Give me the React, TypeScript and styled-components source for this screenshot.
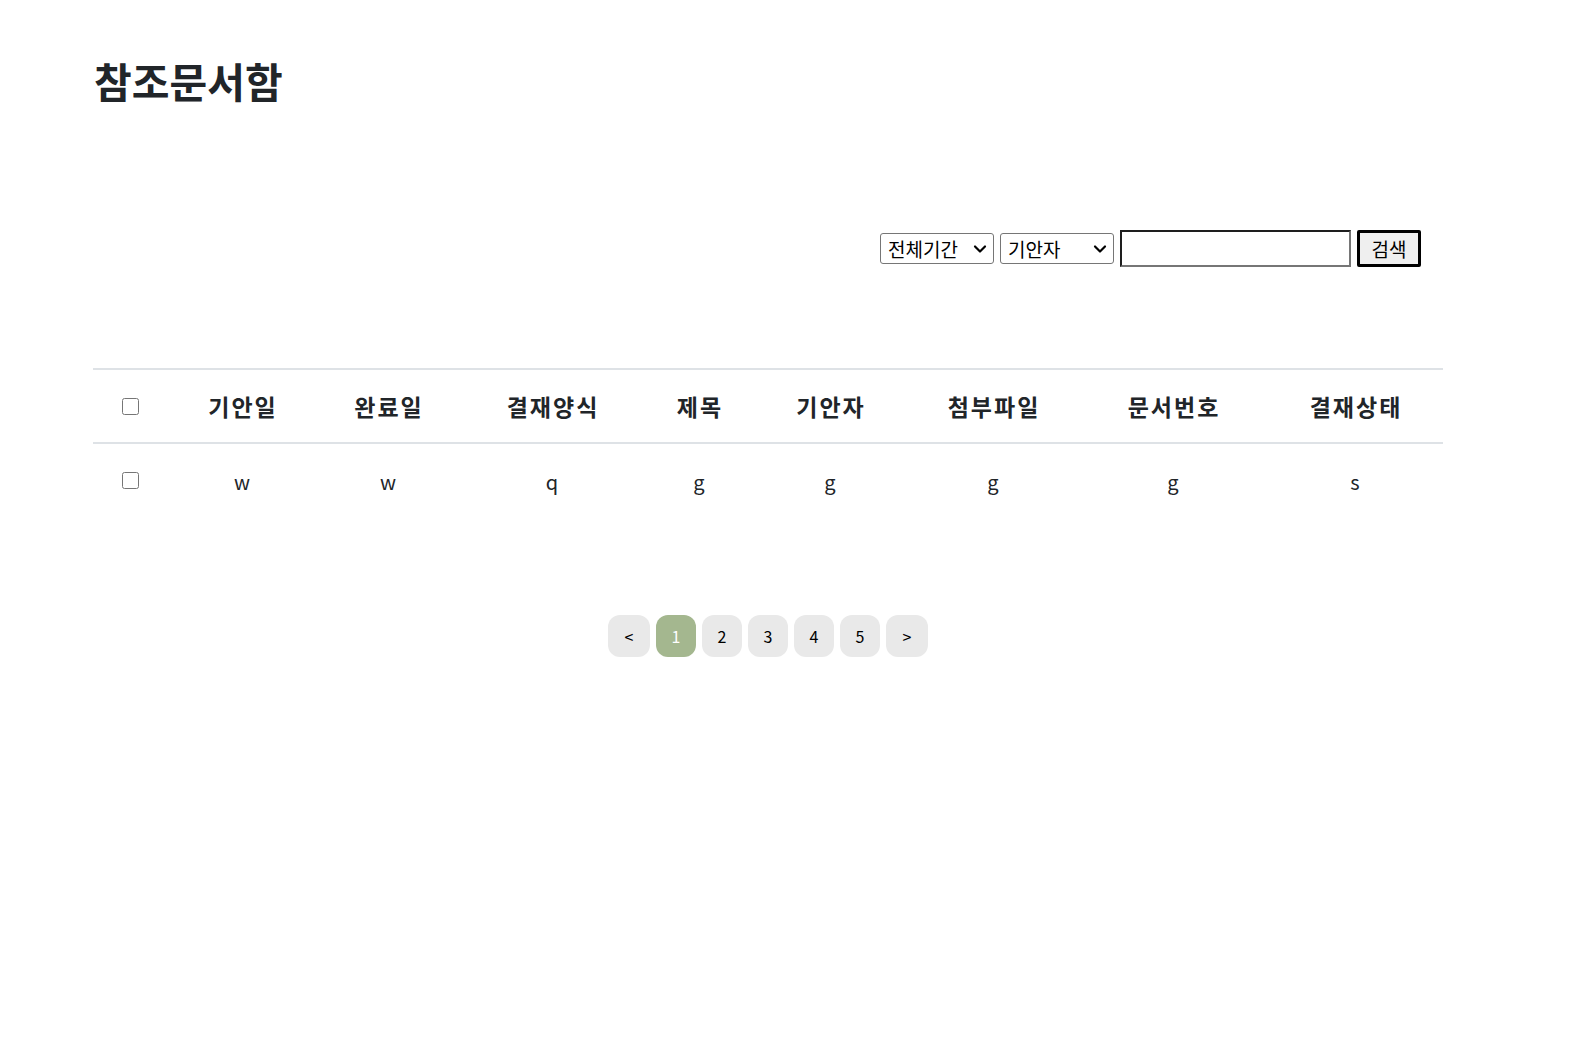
import React from "react";
import styled, { createGlobalStyle } from "styled-components";

const GlobalStyle = createGlobalStyle`
  html, body {
    margin: 0;
    padding: 0;
    background: #ffffff;
  }
  body {
    font-family: "Noto Sans CJK KR", "Noto Sans", sans-serif;
    color: #212529;
  }
`;

const chevron =
  "url(\"data:image/svg+xml;utf8,<svg xmlns='http://www.w3.org/2000/svg' width='14' height='10' viewBox='0 0 14 10'><path d='M2 2.5 L7 7.5 L12 2.5' fill='none' stroke='%23000' stroke-width='2.2' stroke-linecap='round' stroke-linejoin='round'/></svg>\")";

const Page = styled.div`
  width: 1350px;
  padding: 0 0 0 93px;
  display: flex;
  flex-direction: column;
`;

const Title = styled.h1`
  margin: 56px 0 0 1px;
  font-size: 41px;
  line-height: 1.2;
  font-weight: 700;
  color: #212529;
`;

const SearchBar = styled.form`
  margin-top: 125px;
  padding-right: 22px;
  display: flex;
  justify-content: flex-end;
  align-items: center;
  gap: 6px;
  height: 37px;
`;

const Select = styled.select`
  box-sizing: border-box;
  width: 114px;
  height: 31px;
  appearance: none;
  -webkit-appearance: none;
  font-family: "Noto Sans CJK KR", sans-serif;
  font-size: 19px;
  color: #000;
  background-color: #fff;
  background-image: ${chevron};
  background-repeat: no-repeat;
  background-position: right 6px center;
  background-size: 14px 10px;
  border: 1px solid #767676;
  border-radius: 3px;
  padding: 0 22px 0 7px;
`;

const SearchInput = styled.input`
  box-sizing: border-box;
  width: 231px;
  height: 37px;
  border-style: solid;
  border-width: 2px;
  border-color: #1e1e1e #767676 #767676 #1e1e1e;
  padding: 0 6px;
  font-size: 18px;
  font-family: "Noto Sans CJK KR", sans-serif;
`;

const SearchButton = styled.button`
  box-sizing: border-box;
  width: 64px;
  height: 37px;
  background: #efefef;
  border: 3px solid #000;
  border-radius: 2px;
  font-family: "Noto Sans CJK KR", sans-serif;
  font-size: 19px;
  color: #000;
  padding: 0;
`;

const Table = styled.table`
  margin-top: 101px;
  width: 1350px;
  border-collapse: collapse;
  table-layout: fixed;
`;

const HeadRow = styled.tr`
  border-top: 2px solid #dee2e6;
  border-bottom: 2px solid #dee2e6;
`;

const Th = styled.th`
  height: 72px;
  padding: 0 0 0 2px;
  text-align: center;
  vertical-align: middle;
  font-size: 23px;
  letter-spacing: 2px;
  font-weight: 700;
  color: #212529;
`;

const Td = styled.td`
  height: 71px;
  padding: 2px 0 0 0;
  text-align: center;
  vertical-align: middle;
  font-size: 20px;
  font-weight: 400;
  color: #212529;
`;

const CheckCell = styled.td`
  height: 71px;
  padding: 0;
  vertical-align: middle;
`;

const CheckHead = styled.th`
  height: 72px;
  padding: 0;
  vertical-align: middle;
`;

const Check = styled.input.attrs({ type: "checkbox" })`
  display: block;
  width: 17px;
  height: 17px;
  margin: 0 auto;
`;

const Pager = styled.nav`
  margin-top: 98px;
  display: flex;
  justify-content: center;
  gap: 6px;
`;

const PageButton = styled.button<{ $active?: boolean; $arrow?: boolean }>`
  width: ${(p) => (p.$arrow ? "42px" : "40px")};
  height: 42px;
  border: none;
  border-radius: 12px;
  background: ${(p) => (p.$active ? "#a4b78f" : "#e9e9e9")};
  color: ${(p) => (p.$active ? "#ffffff" : "#000000")};
  font-family: "Noto Sans CJK KR", sans-serif;
  font-size: 16px;
  padding: 0;
`;

const columns = [
  { key: "chk", width: 74 },
  { key: "기안일", width: 150 },
  { key: "완료일", width: 142 },
  { key: "결재양식", width: 186 },
  { key: "제목", width: 108 },
  { key: "기안자", width: 154 },
  { key: "첨부파일", width: 172 },
  { key: "문서번호", width: 188 },
  { key: "결재상태", width: 176 },
];

const rows = [["w", "w", "q", "g", "g", "g", "g", "s"]];

export default function App() {
  return (
    <>
      <GlobalStyle />
      <Page>
        <Title>참조문서함</Title>
        <SearchBar onSubmit={(e) => e.preventDefault()}>
          <Select defaultValue="all">
            <option value="all">전체기간</option>
            <option value="week">1주일</option>
            <option value="month">1개월</option>
          </Select>
          <Select defaultValue="drafter">
            <option value="drafter">기안자</option>
            <option value="title">제목</option>
          </Select>
          <SearchInput type="text" />
          <SearchButton type="submit">검색</SearchButton>
        </SearchBar>
        <Table>
          <colgroup>
            {columns.map((c) => (
              <col key={c.key} style={{ width: c.width }} />
            ))}
          </colgroup>
          <thead>
            <HeadRow>
              <CheckHead>
                <Check />
              </CheckHead>
              {columns.slice(1).map((c) => (
                <Th key={c.key}>{c.key}</Th>
              ))}
            </HeadRow>
          </thead>
          <tbody>
            {rows.map((r, i) => (
              <tr key={i}>
                <CheckCell>
                  <Check />
                </CheckCell>
                {r.map((v, j) => (
                  <Td key={j}>{v}</Td>
                ))}
              </tr>
            ))}
          </tbody>
        </Table>
        <Pager>
          <PageButton $arrow>&lt;</PageButton>
          <PageButton $active>1</PageButton>
          <PageButton>2</PageButton>
          <PageButton>3</PageButton>
          <PageButton>4</PageButton>
          <PageButton>5</PageButton>
          <PageButton $arrow>&gt;</PageButton>
        </Pager>
      </Page>
    </>
  );
}
